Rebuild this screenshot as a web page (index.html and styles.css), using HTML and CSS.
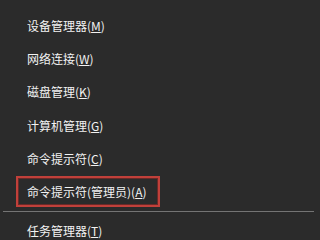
FILE: index.html
```html
<!DOCTYPE html>
<html lang="zh-CN">
<head>
<meta charset="utf-8">
<link rel="stylesheet" href="styles.css">
</head>
<body>
<div class="menu">
  <div class="item">设备管理器(<u>M</u>)</div>
  <div class="item">网络连接(<u>W</u>)</div>
  <div class="item">磁盘管理(<u>K</u>)</div>
  <div class="item">计算机管理(<u>G</u>)</div>
  <div class="item">命令提示符(<u>C</u>)</div>
  <div class="item selected">命令提示符(管理员)(<u>A</u>)</div>
  <div class="sep"></div>
  <div class="item">任务管理器(<u>T</u>)</div>
</div>
</body>
</html>
```
FILE: styles.css
```css
html, body {
  margin: 0;
  padding: 0;
  background: #2b2b2b;
  overflow: hidden;
}
.menu {
  padding-top: 9.5px;
  display: flex;
  flex-direction: column;
  font-family: "Noto Sans CJK SC", "Noto Sans", sans-serif;
  font-size: 12px;
  color: #f2f2f2;
}
.item {
  box-sizing: border-box;
  height: 31px;
  width: 144px;
  margin-left: 16px;
  margin-bottom: 2.4px;
  padding-left: 9px;
  border: 2px solid transparent;
  display: flex;
  align-items: center;
  white-space: nowrap;
  letter-spacing: 0;
}
.item u {
  text-decoration-thickness: 1px;
  text-underline-offset: 1px;
}
.selected {
  border-color: #c1403a;
  box-shadow: inset 0 0 0 1px #6a2a28;
  margin-bottom: 4px;
}
.sep {
  height: 1px;
  margin: 0 6px 3px 3px;
  background: #747474;
}
```
